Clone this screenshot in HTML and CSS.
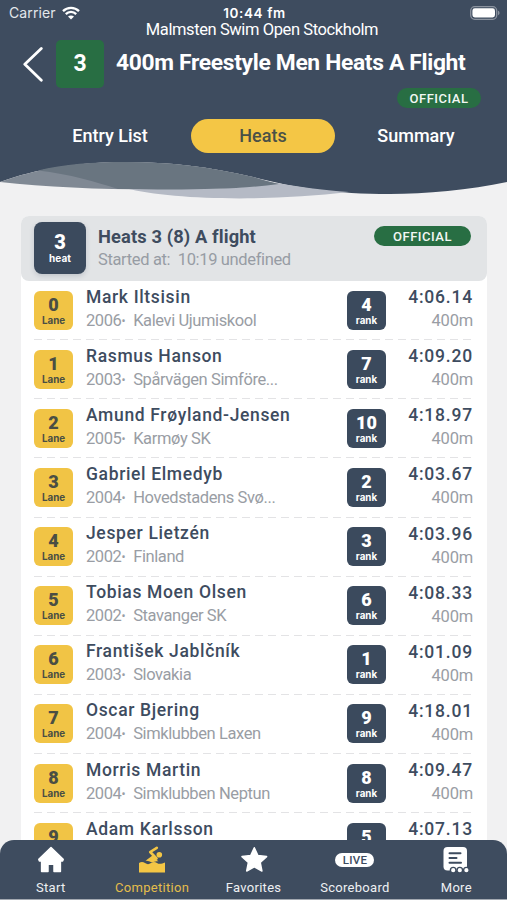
FILE: index.html
```html
<!DOCTYPE html>
<html lang="en">
<head>
    <meta charset="UTF-8">
    <meta name="viewport" content="width=device-width, initial-scale=1.0">
    <title>Malmsten Swim Open Stockholm</title>
    <link rel="stylesheet" href="styles.css">
</head>
<body>
    <div class="app">
        <header class="header">
            <div class="status-bar">
                <div class="carrier">
                    <span>Carrier</span>
                    <svg width="18" height="14" viewBox="0 0 18 14" fill="none" stroke="#fff" stroke-width="2.3">
                        <path d="M1 5.1C5.4 .7 12.6 .7 17 5.1"/>
                        <path d="M3.8 8.1C6.7 5.2 11.3 5.2 14.2 8.1"/>
                        <path d="M9 13.6L6 10.6C7.7 9 10.3 9 12 10.6Z" fill="#fff" stroke="none"/>
                    </svg>
                </div>
                <div class="clock">10:44 fm</div>
                <div class="battery">
                    <svg width="30" height="14" viewBox="0 0 30 14">
                        <rect x=".7" y=".7" width="26" height="12.6" rx="4" fill="none" stroke="#8b939f" stroke-width="1.3"/>
                        <rect x="2.4" y="2.3" width="22.6" height="9.2" rx="2.4" fill="#fff"/>
                        <path d="M28 4.8C30 5.4 30 8.6 28 9.2Z" fill="#8b939f"/>
                    </svg>
                </div>
            </div>
            <div class="meet">Malmsten Swim Open Stockholm</div>
            <div class="title-row">
                <svg class="back" width="20" height="36" viewBox="0 0 20 36" fill="none" stroke="#fff" stroke-width="2.8" stroke-linecap="round" stroke-linejoin="round">
                    <path d="M18.3 2.5L1.8 18.3L18.3 34.2"/>
                </svg>
                <div class="event-number">3</div>
                <h1>400m Freestyle Men Heats A Flight</h1>
            </div>
            <div class="official header-official">OFFICIAL</div>
            <nav class="tabs">
                <a class="tab">Entry List</a>
                <a class="tab active">Heats</a>
                <a class="tab">Summary</a>
            </nav>
        </header>
        <svg class="wave" width="507" height="40" viewBox="0 0 507 40">
            <path d="M0 0H507V22C470 30 425 34 390 34C335 34 295 28 253 17C210 7 170 2 125 2C80 2 35 9 0 22Z" fill="#3e4c5f"/>
            <path d="M0 22C35 9 80 2 125 2C170 2 210 7 253 17C262 20 270 22 279 24C215 31 85 32 0 22Z" fill="#808994"/>
            <path d="M125 28C172 40 265 42 349 32C320 30 300 27 277 23C245 29 185 30 125 28Z" fill="#b5bac5"/>
            <path d="M38 10.5C63 4 95 2 125 2C170 2 210 7 253 17C262 20 270 22 279 24C235 30 180 30 118 29C96 22 70 14 38 10.5Z" fill="#697580"/>
        </svg>

        <main class="content">
            <section class="card">
                <div class="heat-header">
                    <div class="heat-box"><b>3</b><span>heat</span></div>
                    <div class="heat-info">
                        <h2>Heats 3 (8) A flight</h2>
                        <p>Started at:&nbsp; 10:19 undefined</p>
                    </div>
                    <div class="official">OFFICIAL</div>
                </div>
                <div class="lanes">
                    <div class="lane">
                        <div class="box yellow"><b>0</b><span>Lane</span></div>
                        <div class="swimmer"><h3>Mark Iltsisin</h3><p>2006<i>•</i>Kalevi Ujumiskool</p></div>
                        <div class="box"><b>4</b><span>rank</span></div>
                        <div class="result"><strong>4:06.14</strong><p>400m</p></div>
                    </div>
                    <div class="lane">
                        <div class="box yellow"><b>1</b><span>Lane</span></div>
                        <div class="swimmer"><h3>Rasmus Hanson</h3><p>2003<i>•</i>Spårvägen Simföre...</p></div>
                        <div class="box"><b>7</b><span>rank</span></div>
                        <div class="result"><strong>4:09.20</strong><p>400m</p></div>
                    </div>
                    <div class="lane">
                        <div class="box yellow"><b>2</b><span>Lane</span></div>
                        <div class="swimmer"><h3>Amund Frøyland-Jensen</h3><p>2005<i>•</i>Karmøy SK</p></div>
                        <div class="box"><b>10</b><span>rank</span></div>
                        <div class="result"><strong>4:18.97</strong><p>400m</p></div>
                    </div>
                    <div class="lane">
                        <div class="box yellow"><b>3</b><span>Lane</span></div>
                        <div class="swimmer"><h3>Gabriel Elmedyb</h3><p>2004<i>•</i>Hovedstadens Svø...</p></div>
                        <div class="box"><b>2</b><span>rank</span></div>
                        <div class="result"><strong>4:03.67</strong><p>400m</p></div>
                    </div>
                    <div class="lane">
                        <div class="box yellow"><b>4</b><span>Lane</span></div>
                        <div class="swimmer"><h3>Jesper Lietzén</h3><p>2002<i>•</i>Finland</p></div>
                        <div class="box"><b>3</b><span>rank</span></div>
                        <div class="result"><strong>4:03.96</strong><p>400m</p></div>
                    </div>
                    <div class="lane">
                        <div class="box yellow"><b>5</b><span>Lane</span></div>
                        <div class="swimmer"><h3>Tobias Moen Olsen</h3><p>2002<i>•</i>Stavanger SK</p></div>
                        <div class="box"><b>6</b><span>rank</span></div>
                        <div class="result"><strong>4:08.33</strong><p>400m</p></div>
                    </div>
                    <div class="lane">
                        <div class="box yellow"><b>6</b><span>Lane</span></div>
                        <div class="swimmer"><h3>František Jablčník</h3><p>2003<i>•</i>Slovakia</p></div>
                        <div class="box"><b>1</b><span>rank</span></div>
                        <div class="result"><strong>4:01.09</strong><p>400m</p></div>
                    </div>
                    <div class="lane">
                        <div class="box yellow"><b>7</b><span>Lane</span></div>
                        <div class="swimmer"><h3>Oscar Bjering</h3><p>2004<i>•</i>Simklubben Laxen</p></div>
                        <div class="box"><b>9</b><span>rank</span></div>
                        <div class="result"><strong>4:18.01</strong><p>400m</p></div>
                    </div>
                    <div class="lane">
                        <div class="box yellow"><b>8</b><span>Lane</span></div>
                        <div class="swimmer"><h3>Morris Martin</h3><p>2004<i>•</i>Simklubben Neptun</p></div>
                        <div class="box"><b>8</b><span>rank</span></div>
                        <div class="result"><strong>4:09.47</strong><p>400m</p></div>
                    </div>
                    <div class="lane">
                        <div class="box yellow"><b>9</b></div>
                        <div class="swimmer"><h3>Adam Karlsson</h3></div>
                        <div class="box"><b>5</b></div>
                        <div class="result"><strong>4:07.13</strong></div>
                    </div>
                </div>
            </section>
        </main>

        <nav class="bottom-bar">
            <a class="nav-item">
                <svg width="28" height="28" viewBox="0 0 28 28" fill="#fff" stroke="#fff" stroke-width="1.5" stroke-linejoin="round">
                    <path d="M14 1.6L1.8 13.4L2.4 14.9H4.6V25.6H11V19C11 17.8 17 17.8 17 19V25.6H23.4V14.9H25.6L26.2 13.4Z"/>
                </svg>
                <span>Start</span>
            </a>
            <a class="nav-item selected">
                <svg width="28" height="28" viewBox="0 0 28 28" fill="#f4c645">
                    <path d="M1 17C3 15.5 5 15.5 7 17S11 18.5 13 17S17 15.5 19 17S24 17.8 27 16.5V26.5H1Z"/>
                    <path d="M7.5 14.8L14.5 9.5L20.5 15.6C17.5 14.6 16 16.6 13.5 16.2C11.5 15.8 10 14.4 7.5 14.8Z"/>
                    <path d="M18.8 1.8L12.2 6L18.5 12.5" fill="none" stroke="#f4c645" stroke-width="2.6" stroke-linecap="round" stroke-linejoin="round"/>
                    <circle cx="21.3" cy="8.8" r="2.8"/>
                </svg>
                <span>Competition</span>
            </a>
            <a class="nav-item">
                <svg width="28" height="28" viewBox="0 0 28 28" fill="#fff" stroke="#fff" stroke-width="1.5" stroke-linejoin="round">
                    <path d="M14.3 1.8L17.9 9.6L26.6 10.6L20.2 16.5L21.9 25L14.3 20.8L6.7 25L8.4 16.5L2 10.6L10.7 9.6Z"/>
                </svg>
                <span>Favorites</span>
            </a>
            <a class="nav-item">
                <div class="live"><em>LIVE</em></div>
                <span>Scoreboard</span>
            </a>
            <a class="nav-item">
                <svg width="28" height="28" viewBox="0 0 28 28">
                    <rect x="1.5" y="1" width="23.5" height="23.5" rx="4" fill="#fff"/>
                    <path d="M7.5 7.2H18.5M7.5 12H14.5M7.5 16.8H19" stroke="#3e4c5f" stroke-width="2" stroke-linecap="round"/>
                    <g fill="#fff" stroke="#3e4c5f" stroke-width="1.4">
                        <circle cx="11.2" cy="24.2" r="2.8"/>
                        <circle cx="17.8" cy="24.2" r="2.8"/>
                        <circle cx="24.4" cy="24.2" r="2.8"/>
                    </g>
                </svg>
                <span>More</span>
            </a>
        </nav>
    </div>
</body>
</html>
```
FILE: styles.css
```css
* {
    box-sizing: border-box;
}

body {
    margin: 0;
    background-color: #f1f1f2;
    font-family: Roboto, sans-serif;
    color: #3e4c5f;
}

h1, h2, h3, p {
    margin: 0;
    white-space: nowrap;
}

.app {
    display: flex;
    flex-direction: column;
    width: 507px;
    height: 900px;
    overflow: hidden;
}

.header {
    display: flex;
    flex-direction: column;
    flex: none;
    height: 160px;
    background-color: #3e4c5f;
    color: white;
}

.status-bar {
    display: grid;
    grid-template-columns: 1fr auto 1fr;
    align-items: center;
    height: 20px;
    padding: 6px 7px 0 9px;
    font-family: Inter, sans-serif;
    font-size: 14px;
    line-height: 14px;
}

.carrier {
    display: flex;
    align-items: center;
    gap: 6px;
    color: #e3e7ec;
    letter-spacing: 0.1px;
}

.clock {
    font-weight: 600;
    font-size: 13.5px;
    letter-spacing: 0.6px;
}

.battery {
    display: flex;
    justify-content: flex-end;
}

.meet {
    height: 20px;
    padding-left: 17px;
    line-height: 20px;
    font-size: 16.5px;
    letter-spacing: -0.4px;
    text-align: center;
}

.title-row {
    display: flex;
    align-items: center;
    height: 47px;
    padding-left: 23px;
}

.event-number {
    width: 48px;
    height: 48px;
    margin: 0 12px 0 13px;
    border-radius: 5px;
    background-color: #286e43;
    font-size: 23px;
    font-weight: 700;
    line-height: 48px;
    text-align: center;
}

h1 {
    padding-bottom: 3px;
    font-size: 22.8px;
    font-weight: 700;
    letter-spacing: -0.32px;
}

.official {
    width: 97px;
    height: 20px;
    border-radius: 10px;
    background-color: #286e43;
    color: #f2f7f4;
    font-size: 13px;
    font-weight: 500;
    letter-spacing: 0.5px;
    line-height: 21px;
    text-align: center;
}

.header-official {
    width: 84px;
    margin: 1px 0 0 397px;
}

.tabs {
    display: flex;
    gap: 9px;
    margin: 11px 18px 0 38px;
}

.tab {
    width: 144px;
    height: 34px;
    border-radius: 17px;
    font-size: 18px;
    font-weight: 500;
    line-height: 34px;
    text-align: center;
}

.tab.active {
    background-color: #f4c645;
    color: #4a5147;
}

.wave {
    display: block;
    flex: none;
}

.content {
    flex: 1;
    min-height: 0;
    overflow: hidden;
    padding: 16px 20px 0 21px;
}

.card {
    border-radius: 8px;
    background-color: white;
}

.heat-header {
    display: flex;
    height: 65px;
    padding: 0 16px 0 13px;
    border-radius: 8px;
    background-color: #e2e4e6;
}

.heat-box {
    display: flex;
    flex-direction: column;
    align-items: center;
    width: 52px;
    height: 52px;
    margin-top: 6px;
    padding-top: 9px;
    border-radius: 8px;
    background-color: #3b4a5d;
    box-shadow: 0 2px 5px rgba(62, 76, 95, 0.2);
    color: white;
    font-weight: 700;
}

.heat-box b {
    font-size: 20px;
    line-height: 22px;
}

.heat-box span {
    font-family: Inter, sans-serif;
    font-size: 10px;
    line-height: 11px;
    letter-spacing: 0.1px;
}

.heat-info {
    flex: 1;
    padding: 9px 0 0 12px;
}

h2 {
    font-size: 18.3px;
    font-weight: 700;
    line-height: 24px;
    letter-spacing: 0.12px;
}

.heat-info p {
    color: #979ca4;
    font-size: 16.5px;
    line-height: 21px;
    letter-spacing: -0.35px;
}

.heat-header .official {
    margin-top: 10px;
}

.lane {
    display: flex;
    height: 59.15px;
    margin: 0 14px 0 13px;
    padding-top: 9.5px;
    background: repeating-linear-gradient(90deg, #e3e3e5 0 8px, transparent 8px 13px) bottom / 100% 1px no-repeat;
}

.box {
    display: flex;
    flex-direction: column;
    align-items: center;
    width: 39px;
    height: 39px;
    padding-top: 5px;
    border-radius: 6px;
    background-color: #3b4a5d;
    color: white;
    font-weight: 700;
}

.box.yellow {
    background-color: #f1c445;
    color: #4a4e44;
}

.box b {
    font-size: 18px;
    line-height: 18px;
}

.box span {
    font-family: Inter, sans-serif;
    font-size: 9.8px;
    line-height: 13px;
}

.swimmer {
    width: 274px;
    padding-left: 13px;
    margin-top: -5px;
}

h3 {
    font-size: 17.5px;
    font-weight: 500;
    line-height: 23px;
    letter-spacing: 0.65px;
}

.swimmer p,
.result p {
    color: #999da4;
    font-size: 16.5px;
    line-height: 23px;
    letter-spacing: -0.4px;
}

.swimmer i {
    margin-right: 8px;
    font-size: 12px;
    font-style: normal;
    vertical-align: 1px;
}

.result {
    flex: 1;
    margin-top: -4.5px;
    text-align: right;
}

.result strong {
    display: block;
    font-size: 17.5px;
    font-weight: 500;
    line-height: 23px;
    letter-spacing: 0.8px;
    white-space: nowrap;
}

.result p {
    letter-spacing: -0.2px;
}

.bottom-bar {
    display: flex;
    flex: none;
    height: 60px;
    border-bottom: 1px solid #a3a9b1;
    border-radius: 14px 14px 0 0;
    background-color: #3e4c5f;
}

.nav-item {
    display: flex;
    flex: 1;
    flex-direction: column;
    align-items: center;
    padding-top: 6px;
    color: #eef0f3;
    font-size: 13px;
    letter-spacing: 0.3px;
}

.nav-item span {
    margin-top: 6px;
    line-height: 16px;
}

.nav-item.selected {
    color: #e4bd4b;
}

.live {
    display: flex;
    align-items: center;
    height: 28px;
}

.live em {
    width: 39px;
    height: 14px;
    border-radius: 7px;
    background-color: white;
    color: #3e4c5f;
    font-size: 11.5px;
    font-style: normal;
    font-weight: 500;
    line-height: 15px;
    text-align: center;
}
```
